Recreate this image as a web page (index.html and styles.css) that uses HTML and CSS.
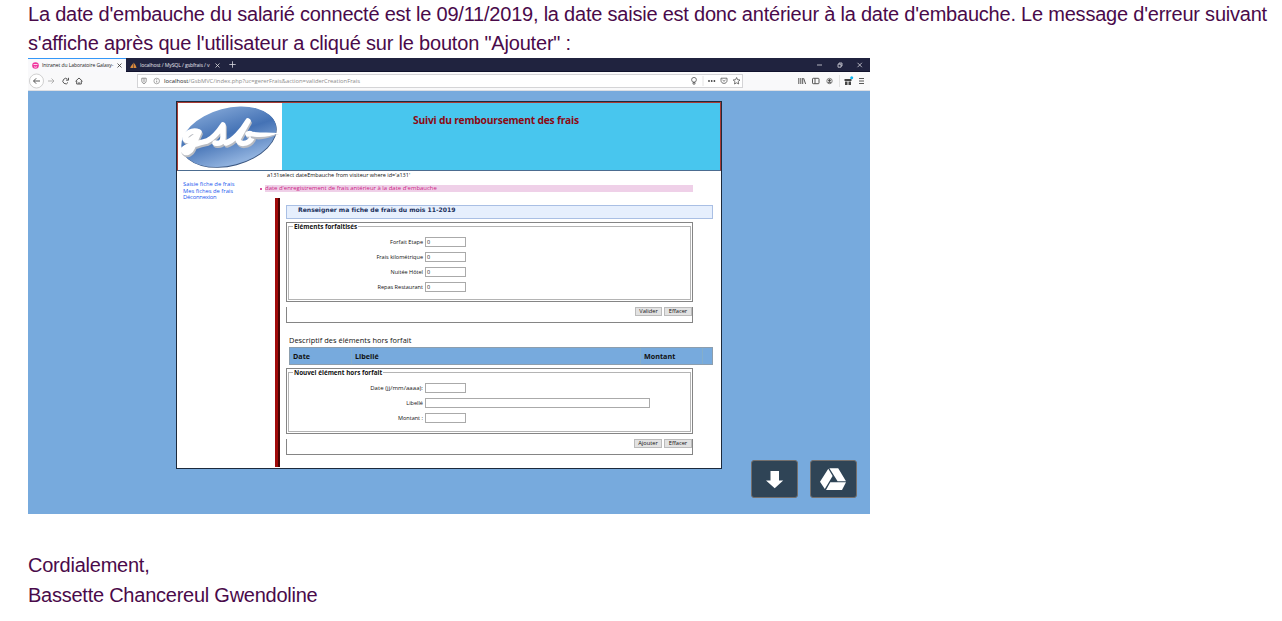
FILE: index.html
```html
<!DOCTYPE html>
<html lang="fr">
<head>
<meta charset="utf-8">
<title>Suivi du remboursement des frais</title>
<link rel="stylesheet" href="styles.css">
</head>
<body>
<main class="doc">
  <p class="para intro"><span class="l1">La date d'embauche du salarié connecté est le 09/11/2019, la date saisie est donc antérieur à la date d'embauche. Le message d'erreur suivant</span><br><span class="l2">s'affiche après que l'utilisateur a cliqué sur le bouton "Ajouter" :</span></p>
  <section class="shot">
    <header class="tabs">
      <div class="tab active">
        <svg class="fav" viewBox="0 0 7 7"><circle cx="3.5" cy="3.5" r="3.3" fill="#f0389f"/><path d="M1.5 2.5h4M2 4.500c1 1 2 1 3 0" stroke="#fff" fill="none" stroke-width=".8"/></svg>
        <span class="tabt">Intranet du Laboratoire Galaxy-</span>
        <svg class="x" viewBox="0 0 5 5"><path d="M.5.5l4 4M4.500.5l-4 4" stroke="#333" stroke-width=".8"/></svg>
      </div>
      <div class="tab">
        <svg class="fav" viewBox="0 0 7 7"><path d="M.2 6C.8 4 2 2.600 3 1.500V6zM3.500 6V.5C5 2 6.200 4 6.500 6z" fill="#d98a3c"/></svg>
        <span class="tabt">localhost / MySQL / gsbfrais / v</span>
        <svg class="x" viewBox="0 0 5 5"><path d="M.5.5l4 4M4.500.5l-4 4" stroke="#ddd" stroke-width=".8"/></svg>
      </div>
      <svg class="plus" viewBox="0 0 7 7"><path d="M3.500.3v6.400M.3 3.500h6.400" stroke="#d8d8e0" stroke-width=".8"/></svg>
      <svg class="win" viewBox="0 0 46 6"><g fill="none" stroke="#d8d8e0" stroke-width=".8"><path d="M0 3h5"/><path d="M21 2.200h3v3h-3zM22 2V1h3v3h-1"/><path d="M40.500.8l4.400 4.400M44.900.8l-4.400 4.400"/></g></svg>
    </header>
    <nav class="bar">
      <svg class="navicons" viewBox="0 0 58 18"><g fill="none" stroke="#444" stroke-width=".9"><circle cx="8.500" cy="9" r="7" stroke="#bbb" fill="#fff" stroke-width=".7"/><path d="M12 9H5.700M8.200 6.300L5.500 9l2.700 2.700"/><path d="M20 9h6M23.500 6.500L26 9l-2.500 2.500" stroke="#aaa"/><path d="M40 10.400a2.700 2.700 0 1 1-.5-3.200M40.500 5.800v2.400h-2.400"/><path d="M47.500 9.300L51 6l3.500 3.300M48.700 8.800v3.200h4.600V8.800M51 12v-2"/></g></svg>
      <div class="url">
        <svg class="shield" viewBox="0 0 20 8"><g fill="none" stroke="#666" stroke-width=".7"><path d="M.8 1.200h4.400v2.400c0 1.700-1 2.600-2.200 3.200C1.800 6.200.8 5.300.8 3.600zM3 1.500v4"/><circle cx="15.700" cy="4" r="2.800" stroke="#888"/><path d="M15.700 3.600v1.900M15.700 2.300v.7"/></g></svg>
        <span class="addr"><b>localhost</b>/GsbMVC/index.php?uc=gererFrais&amp;action=validerCreationFrais</span>
        <svg class="urlicons" viewBox="0 0 52 10"><g fill="none" stroke="#555" stroke-width=".8"><circle cx="5" cy="3.800" r="2.400"/><path d="M4 6.500h2v1.600H4z"/><path d="M14 0v10" stroke="#ddd"/><path d="M32 2.200h6v2.400c0 3.700-6 3.700-6 0zM33.500 4l1.500 1.300L36.500 4"/><path d="M47.600 1.500l1 2.200 2.400.3-1.800 1.600.5 2.400-2.100-1.200L45.500 8l.5-2.400L44.200 4l2.400-.3z"/></g><g fill="#444"><circle cx="20" cy="5" r=".9"/><circle cx="22.700" cy="5" r=".9"/><circle cx="25.400" cy="5" r=".9"/></g></svg>
      </div>
      <svg class="tools" viewBox="0 0 68 12"><g fill="none" stroke="#444" stroke-width=".9"><path d="M.8 3v6M2.800 3v6M4.700 3v6M5.600 3.200l2 5.800"/><rect x="14.500" y="3.300" width="6.500" height="5.400" rx=".8"/><path d="M17 3.500v5"/><circle cx="31.500" cy="6" r="2.700" stroke="#777"/><circle cx="31.500" cy="5.500" r=".9" fill="#444"/><path d="M30 7.700h3M61 3.500h5M61 6h5M61 8.500h5"/></g><path d="M41.500 0v12" stroke="#e2e2e2"/><path d="M46.500 4h7v2h-7zM47 6.500h2.500V10H47zM50.500 6.500H53V10h-2.500z" fill="#444"/><circle cx="53.700" cy="2.700" r="1.500" fill="#0ab4f0"/></svg>
    </nav>
    <div class="view">
      <div class="page">
        <div class="banner">
          <div class="logo">
            <svg viewBox="0 0 104 66"><defs><linearGradient id="g" x1="0" y1="0" x2=".1" y2="1"><stop offset="0" stop-color="#7da2d4"/><stop offset=".5" stop-color="#4472b5"/><stop offset="1" stop-color="#8fb1de"/></linearGradient></defs>
            <ellipse cx="51.300" cy="34.600" rx="48.500" ry="28.500" transform="rotate(-15 51.300 34.600)" fill="#38547e"/>
            <ellipse cx="50.800" cy="33.800" rx="48.500" ry="28.500" transform="rotate(-15 50.800 33.800)" fill="url(#g)"/>
            <g fill="none" stroke-linecap="round" stroke-linejoin="round">
              <path class="script-shade" transform="translate(1 2)" d="M21 29C14 26 7 31 7 36C10 40 17 35 21 29L15 43C13 49 7 52 5 47C8 43 17 41 29 38C36 35 41 28 45 22L45 34C45 40 41 41 37 40M48 40C55 38 64 28 70 18L60 36C60 42 70 42 74 35C75 31 72 30 70 31"/>
              <path class="script" d="M21 29C14 26 7 31 7 36C10 40 17 35 21 29L15 43C13 49 7 52 5 47C8 43 17 41 29 38C36 35 41 28 45 22L45 34C45 40 41 41 37 40M48 40C55 38 64 28 70 18L60 36C60 42 70 42 74 35C75 31 72 30 70 31"/>
            </g>
            <path d="M72 31C82 34 92 33 101 31L93 34C84 37 78 37 73 35z" fill="#b9bcc2"/><path d="M70 28C80 30 90 29 101 30C92 34 82 35 71 33z" fill="#fff"/></svg>
          </div>
          <h1 class="title">Suivi du remboursement des frais</h1>
        </div>
        <div class="cols">
          <ul class="menu"><li>Saisie fiche de frais</li><li>Mes fiches de frais</li><li class="out">Déconnexion</li></ul>
          <div class="content">
            <p class="sql">a131select dateEmbauche from visiteur where id='a131'</p>
            <div class="error"><i></i><p>date d'enregistrement de frais antérieur à la date d'embauche</p></div>
            <div class="body">
              <h2>Renseigner ma fiche de frais du mois 11-2019</h2>
              <div class="frame f1"><fieldset><legend>Eléments forfaitisés</legend>
                <div class="row"><label>Forfait Etape</label><div class="in">0</div></div>
                <div class="row"><label>Frais kilométrique</label><div class="in">0</div></div>
                <div class="row"><label>Nuitée Hôtel</label><div class="in">0</div></div>
                <div class="row"><label>Repas Restaurant</label><div class="in">0</div></div>
              </fieldset></div>
              <div class="foot"><button class="bv">Valider</button><button>Effacer</button></div>
              <h3>Descriptif des éléments hors forfait</h3>
              <div class="table"><div>Date</div><div>Libellé</div><div>Montant</div><div></div></div>
              <div class="frame f2"><fieldset><legend>Nouvel élément hors forfait</legend>
                <div class="row"><label class="dt">Date (jj/mm/aaaa):</label><div class="in"></div></div>
                <div class="row"><label>Libellé</label><div class="in wide"></div></div>
                <div class="row"><label>Montant :</label><div class="in"></div></div>
              </fieldset></div>
              <div class="foot"><button>Ajouter</button><button>Effacer</button></div>
            </div>
          </div>
        </div>
      </div>
      <div class="actions">
        <div class="act"><svg viewBox="0 0 45 36"><path d="M18.500 10h8.500v9.500h4.200L22.700 27.200 14 19.500h4.500z" fill="#fff"/></svg></div>
        <div class="act"><svg viewBox="0 0 45 36"><path d="M17.300 7.800L21.600 15 13.800 28 9 20.800zM18.400 7.200h8.800L35 20.200H26.600zM19.300 21.200H35L31 29H15z" fill="#fff"/></svg></div>
      </div>
    </div>
  </section>
  <p class="para sign"><span class="s1">Cordialement,</span><br><span class="s2">Bassette Chancereul Gwendoline</span></p>
</main>
</body>
</html>
```
FILE: styles.css
```css
* { box-sizing: border-box; margin: 0; padding: 0; }
body { background: #fff; overflow: hidden; font-family: "Open Sans", "Noto Sans", sans-serif; }
.doc { padding-left: 28px; }
svg { display: block; flex: none; }
.para { font: 20px/30px "Liberation Sans", Arial, sans-serif; color: #4a0a4a; white-space: nowrap; }
.intro { height: 58px; line-height: 29px; }
.l1 { letter-spacing: -0.218px; }
.l2 { letter-spacing: -0.195px; }
.s1 { letter-spacing: -0.23px; }
.s2 { letter-spacing: -0.245px; }
.sign { padding-top: 36px; }

/* Browser window */
.shot { width: 842px; height: 456px; white-space: nowrap; }
.tabs { height: 14px; background: #20233f; display: flex; align-items: center; border-bottom: 1px solid #10122c; }
.tab { height: 14px; display: flex; align-items: center; width: 99px; padding: 1px 0 0 4px; color: #e4e4ec; font-size: 5.2px; letter-spacing: -0.14px; }
.tab.active { background: #f9f9fb; border-top: 1px solid #3498f8; color: #222; width: 98px; padding-top: 0; font-size: 5px; letter-spacing: -0.06px; }
.fav { width: 7px; height: 7px; margin-right: 3px; }
.tabt { width: 71px; flex: none; line-height: 9px; }
.x { width: 5px; height: 5px; margin-left: 4px; }
.plus { width: 7px; height: 7px; margin-left: 4px; }
.win { width: 46px; height: 6px; margin-left: auto; margin-right: 7px; }
.bar { height: 19px; background: #f9f9fa; display: flex; align-items: center; border-bottom: 1px solid #dcdfe4; }
.navicons { width: 58px; height: 18px; }
.url { width: 606px; height: 14px; margin-left: 51px; background: #fff; border: 1px solid #d4d4d6; display: flex; align-items: center; padding-left: 3px; }
.shield { width: 20px; height: 8px; margin-right: 3px; }
.addr { font-size: 5.8px; color: #8c8c8c; }
.addr b { font-weight: 400; color: #222; }
.urlicons { width: 52px; height: 10px; margin-left: auto; margin-right: 1px; }
.tools { width: 68px; height: 12px; margin-left: auto; margin-right: 4px; }

/* GSB intranet page */
.view { position: relative; height: 423px; background: #77aadd; padding: 10px 0 0 148px; }
.page { width: 546px; height: 368px; background: #fff; border: 1px solid #1c2a3c; }
.banner { height: 69px; background: #48c6ee; border: 1px solid #a83a34; border-bottom: 1px solid #4c6c90; display: flex; }
.logo { width: 104px; background: #fff; }
.logo svg { width: 104px; height: 66px; }
.script { stroke: #fff; stroke-width: 5.5; }
.script-shade { stroke: #b9bcc2; stroke-width: 5.5; }
.title { flex: 1; font-size: 10.3px; letter-spacing: -0.23px; line-height: 14px; color: #8b0a14; padding: 10px 0 0 131px; }
.cols { display: flex; height: 297px; }
.menu { list-style: none; width: 83px; padding: 10px 0 0 6px; font-size: 5.8px; line-height: 6.7px; color: #1a58ee; }
.out { letter-spacing: -0.2px; }
.content { flex: 1; }
.sql { font-size: 5.5px; line-height: 8px; height: 14px; padding-left: 7px; color: #111; }
.error { display: flex; align-items: center; height: 7px; }
.error i { width: 2px; height: 2px; border-radius: 50%; background: #c81880; margin-right: 3px; }
.error p { width: 428px; height: 7px; line-height: 7px; font-size: 5.95px; background: #efd0e8; color: #cc1c84; }
.body { margin: 6px 0 0 15px; height: 269px; border-left: 5px ridge #a00a0a; padding: 7px 0 0 6px; }
h2 { width: 427px; height: 14px; background: #e6effd; border: 1px solid #a9bfe4; padding-left: 11px; font: bold 6.1px/8px "DejaVu Sans", sans-serif; letter-spacing: -0.01px; color: #20305c; }
.frame { width: 407px; border: 1px solid #858585; padding: 1px; }
.f1 { height: 80px; margin-top: 3px; }
.f2 { height: 66px; margin-top: 3px; }
fieldset { height: 100%; border: 1px solid #b4b4b4; padding-top: 6px; }
legend { margin: 0 0 0 4px; padding: 0 1px; font-size: 6.35px; line-height: 5px; height: 5px; font-weight: 700; color: #111; }
.row { display: flex; height: 14.9px; align-items: center; gap: 2px; }
label { width: 134px; text-align: right; font-size: 5.55px; line-height: 10px; color: #111; }
.dt { font-size: 6px; letter-spacing: 0.06px; }
.in { width: 41px; height: 10px; border: 1px solid #aaa; background: #fff; font-size: 5.5px; line-height: 8px; padding-left: 1px; color: #111; }
.in.wide { width: 225px; }
.foot { width: 407px; height: 16px; margin-top: 5px; border: 1px solid #858585; border-top: 0; display: flex; justify-content: flex-end; gap: 2px; }
button { width: 28px; height: 9px; background: #e2e2e2; border: 1px solid #bbb; font: 5.7px/7px "Open Sans", sans-serif; color: #111; }
.bv { width: 27px; }
h3 { font-size: 7.4px; letter-spacing: 0.03px; font-weight: 400; line-height: 10px; margin: 12px 0 2px 3px; color: #111; }
.table { width: 424px; height: 18px; margin-left: 3px; background: #77aadd; border: 1px solid #8c9eae; display: grid; grid-template-columns: 62px 289px 62px 1fr; font-size: 7.2px; line-height: 16px; font-weight: 700; color: #111; }
.table div { padding-left: 3px; border-right: 1px solid #84aecb; }
.table div:last-child { border: 0; }

/* Floating actions */
.actions { position: absolute; left: 723px; top: 369px; display: flex; gap: 12px; }
.act { width: 47px; height: 38px; background: #2f4456; border: 1px solid #746f6c; border-radius: 3px; }
.act svg { width: 45px; height: 36px; }
```
